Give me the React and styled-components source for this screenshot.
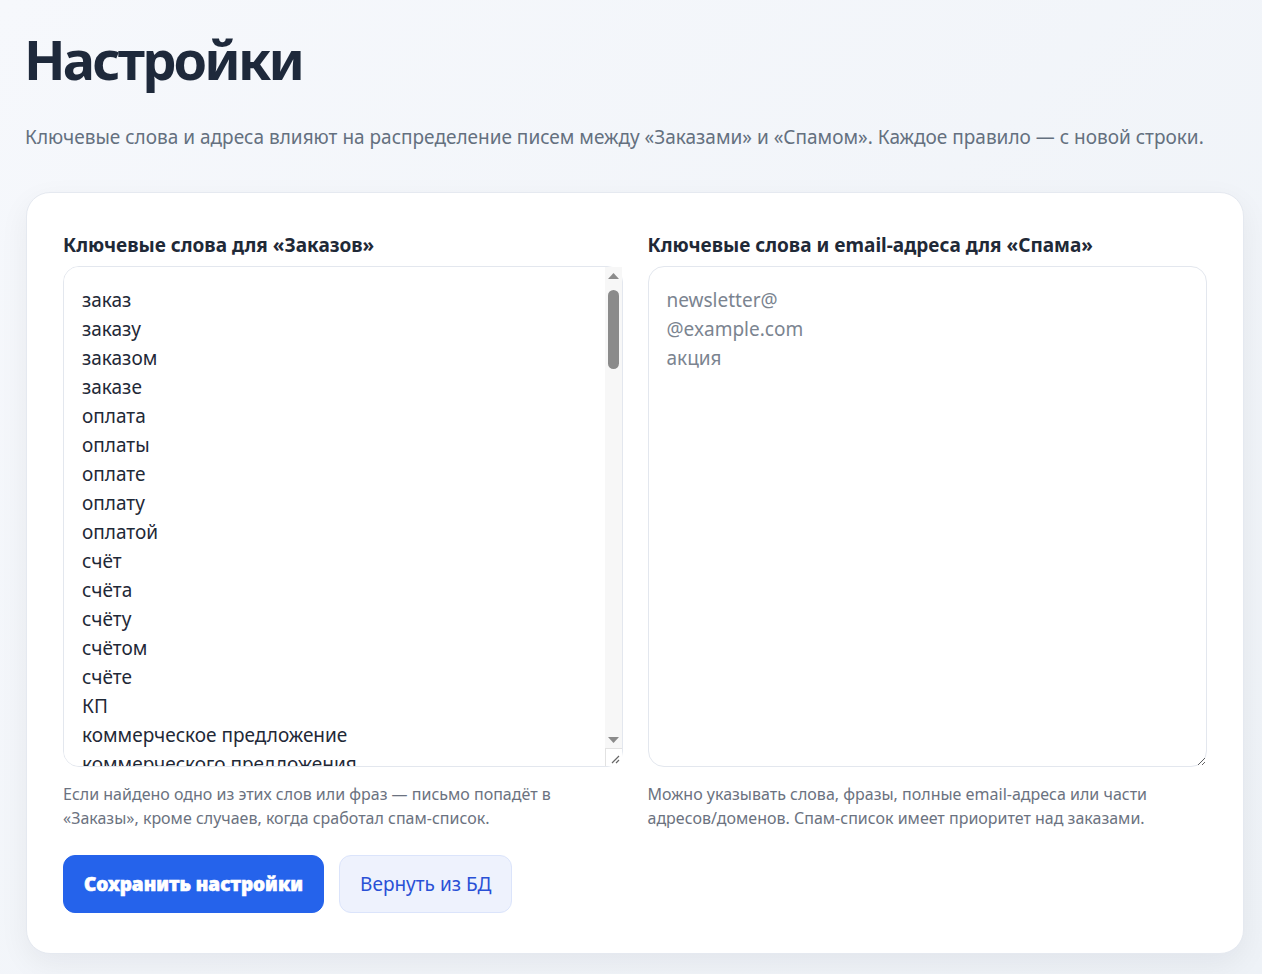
import React from 'react';
import styled, { createGlobalStyle } from 'styled-components';

const GlobalStyle = createGlobalStyle`
  html, body {
    margin: 0;
    padding: 0;
  }
  body {
    font-family: "Noto Sans", "Open Sans", sans-serif;
    background: linear-gradient(135deg, #f6f8fc 0%, #eef2f7 100%);
    color: #1f2937;
    min-height: 974px;
  }
`;

const Page = styled.main`
  padding: 23px 18px 22px 26px;
`;

const Title = styled.h1`
  margin: 0 0 0 -2px;
  font-size: 54px;
  line-height: 72px;
  font-weight: 700;
  color: #1e293b;
  letter-spacing: -2.8px;
`;

const Lead = styled.p`
  margin: 28px 0 0 -1px;
  font-size: 19px;
  line-height: 28px;
  color: #64707f;
`;

const Card = styled.section`
  margin-top: 41px;
  background: #fff;
  border: 1px solid #e5e9f0;
  border-radius: 24px;
  box-shadow: 0 10px 30px rgba(15, 23, 42, 0.06);
  padding: 39px 36px 40px 36px;
`;

const Columns = styled.div`
  display: grid;
  grid-template-columns: 1fr 1fr;
  column-gap: 25px;
`;

const Field = styled.div`
  display: flex;
  flex-direction: column;
`;

const Label = styled.label`
  font-size: 19px;
  line-height: 26px;
  font-weight: 700;
  color: #1f2937;
  margin-bottom: 8px;
`;

const AreaWrap = styled.div`
  position: relative;
`;

const Area = styled.textarea`
  display: block;
  box-sizing: border-box;
  height: 501px;
  width: 100%;
  resize: vertical;
  border: 1px solid #e3e7ee;
  border-radius: 16px;
  padding: 19px 18px;
  font-family: "Noto Sans", "Open Sans", sans-serif;
  font-size: 19px;
  line-height: 29px;
  color: #1f2937;
  background: #fff;
  outline: none;
  &::placeholder {
    color: #7b8490;
  }
`;

/* headless browser hides native scrollbars, so the classic one is drawn over the textarea */
const ScrollBar = styled.div`
  position: absolute;
  top: 1px;
  right: 1px;
  bottom: 1px;
  width: 17px;
  display: flex;
  flex-direction: column;
  background: #f7f7f7;
  pointer-events: none;
`;

const Arrow = styled.div`
  height: 17px;
  display: flex;
  align-items: center;
  justify-content: center;
  flex: none;
`;

const Track = styled.div`
  flex: 1;
  position: relative;
`;

const Thumb = styled.div`
  position: absolute;
  left: 3px;
  right: 3px;
  top: 6px;
  height: 79px;
  border-radius: 6px;
  background: #8b8b8b;
`;

const Corner = styled.div`
  height: 18px;
  flex: none;
  box-sizing: border-box;
  background: #fff;
  border-left: 1px solid #e2e2e2;
  border-top: 1px solid #e2e2e2;
  display: flex;
  align-items: flex-end;
  justify-content: flex-end;
`;

const Hint = styled.p`
  margin: 15px 0 0;
  font-size: 16px;
  line-height: 24px;
  color: #6b7280;
`;

const Actions = styled.div`
  display: flex;
  gap: 15px;
  margin-top: 25px;
`;

const Button = styled.button`
  height: 58px;
  padding: 0 20px;
  border-radius: 12px;
  font-family: "Noto Sans", "Open Sans", sans-serif;
  font-size: 19px;
  cursor: pointer;
  border: 1px solid ${p => (p.$primary ? '#2563eb' : '#dbe4fb')};
  background: ${p => (p.$primary ? '#2563eb' : '#eef2fd')};
  color: ${p => (p.$primary ? '#fff' : '#2950d6')};
  font-weight: ${p => (p.$primary ? 900 : 400)};
  -webkit-text-stroke: ${p => (p.$primary ? '0.6px #fff' : '0')};
`;

const orders = [
  'заказ', 'заказу', 'заказом', 'заказе', 'оплата', 'оплаты', 'оплате', 'оплату', 'оплатой',
  'счёт', 'счёта', 'счёту', 'счётом', 'счёте', 'КП', 'коммерческое предложение',
  'коммерческого предложения', 'коммерческому предложению', 'коммерческим предложением',
  'прайс', 'прайс-лист', 'заявка', 'заявку', 'заявки', 'поставка', 'поставку', 'договор'
].join('\n');

function Grip() {
  return (
    <svg width="9" height="9" viewBox="0 0 9 9" style={{ marginRight: 2, marginBottom: 2 }}>
      <path d="M1 8 L8 1 M5 8 L8 5" stroke="#666" strokeWidth="1.2" />
    </svg>
  );
}

function FakeScrollbar() {
  return (
    <ScrollBar>
      <Arrow>
        <svg width="11" height="6" viewBox="0 0 11 6">
          <polygon points="0,6 11,6 5.5,0" fill="#8b8b8b" />
        </svg>
      </Arrow>
      <Track>
        <Thumb />
      </Track>
      <Arrow>
        <svg width="11" height="6" viewBox="0 0 11 6">
          <polygon points="0,0 11,0 5.5,6" fill="#8b8b8b" />
        </svg>
      </Arrow>
      <Corner>
        <Grip />
      </Corner>
    </ScrollBar>
  );
}

export default function App() {
  return (
    <>
      <GlobalStyle />
      <Page>
        <Title>Настройки</Title>
        <Lead>
          Ключевые слова и адреса влияют на распределение писем между «Заказами» и «Спамом». Каждое правило — с новой строки.
        </Lead>
        <Card>
          <Columns>
            <Field>
              <Label>Ключевые слова для «Заказов»</Label>
              <AreaWrap>
                <Area defaultValue={orders} />
                <FakeScrollbar />
              </AreaWrap>
              <Hint>
                Если найдено одно из этих слов или фраз — письмо попадёт в «Заказы», кроме случаев, когда сработал спам-список.
              </Hint>
            </Field>
            <Field>
              <Label>Ключевые слова и email-адреса для «Спама»</Label>
              <AreaWrap>
                <Area placeholder={'newsletter@\n@example.com\nакция'} />
              </AreaWrap>
              <Hint>
                Можно указывать слова, фразы, полные email-адреса или части адресов/доменов. Спам-список имеет приоритет над заказами.
              </Hint>
            </Field>
          </Columns>
          <Actions>
            <Button $primary>Сохранить настройки</Button>
            <Button>Вернуть из БД</Button>
          </Actions>
        </Card>
      </Page>
    </>
  );
}
